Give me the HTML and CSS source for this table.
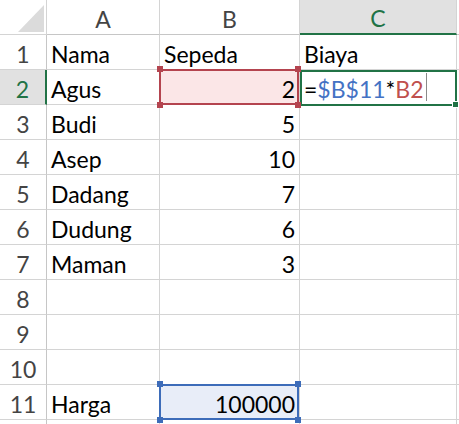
FILE: index.html
```html
<!DOCTYPE html>
<html>
<head>
<meta charset="utf-8">
<link rel="stylesheet" href="styles.css">
</head>
<body>
<div class="sheet">
  <div class="cell corner"><svg class="tri" width="47" height="35" viewBox="0 0 47 35"><polygon points="44,5 44,32 18,32" fill="#dbdbdb"/></svg></div>
  <div class="cell colhead">A</div>
  <div class="cell colhead">B</div>
  <div class="cell colhead sel">C</div>
  <div class="cell colhead edge"></div>

  <div class="cell rowhead">1</div>
  <div class="cell">Nama</div>
  <div class="cell">Sepeda</div>
  <div class="cell">Biaya</div>
  <div class="cell edge"></div>

  <div class="cell rowhead sel">2</div>
  <div class="cell">Agus</div>
  <div class="cell num ref red"><span class="h tl"></span><span class="h tr"></span><span class="h bl"></span><span class="h br"></span>2</div>
  <div class="cell active"><span class="eq">=</span><span class="blue">$B$11</span><span class="eq">*</span><span class="redt">B2</span><span class="caret"></span><span class="fill"></span></div>
  <div class="cell edge"></div>

  <div class="cell rowhead">3</div>
  <div class="cell">Budi</div>
  <div class="cell num">5</div>
  <div class="cell"></div>
  <div class="cell edge"></div>

  <div class="cell rowhead">4</div>
  <div class="cell">Asep</div>
  <div class="cell num">10</div>
  <div class="cell"></div>
  <div class="cell edge"></div>

  <div class="cell rowhead">5</div>
  <div class="cell">Dadang</div>
  <div class="cell num">7</div>
  <div class="cell"></div>
  <div class="cell edge"></div>

  <div class="cell rowhead">6</div>
  <div class="cell">Dudung</div>
  <div class="cell num">6</div>
  <div class="cell"></div>
  <div class="cell edge"></div>

  <div class="cell rowhead">7</div>
  <div class="cell">Maman</div>
  <div class="cell num">3</div>
  <div class="cell"></div>
  <div class="cell edge"></div>

  <div class="cell rowhead">8</div>
  <div class="cell"></div>
  <div class="cell"></div>
  <div class="cell"></div>
  <div class="cell edge"></div>

  <div class="cell rowhead">9</div>
  <div class="cell"></div>
  <div class="cell"></div>
  <div class="cell"></div>
  <div class="cell edge"></div>

  <div class="cell rowhead">10</div>
  <div class="cell"></div>
  <div class="cell"></div>
  <div class="cell"></div>
  <div class="cell edge"></div>

  <div class="cell rowhead">11</div>
  <div class="cell">Harga</div>
  <div class="cell num ref bluebox"><span class="h tl"></span><span class="h tr"></span><span class="h bl"></span><span class="h br"></span>100000</div>
  <div class="cell"></div>
  <div class="cell edge"></div>

  <div class="cell rowhead last"></div>
  <div class="cell last"></div>
  <div class="cell last"></div>
  <div class="cell last"></div>
  <div class="cell edge last"></div>
</div>
</body>
</html>
```

FILE: styles.css
```css
html, body {
  margin: 0;
  padding: 0;
  background: #ffffff;
}
body {
  width: 459px;
  height: 424px;
  overflow: hidden;
}
.sheet {
  display: grid;
  grid-template-columns: 47px 113px 140px 157px 1fr;
  grid-auto-rows: 35px;
  font-family: Lato, "Open Sans", sans-serif;
  font-size: 23px;
  line-height: 28px;
  color: #000;
}
.cell {
  box-sizing: border-box;
  position: relative;
  display: flex;
  align-items: flex-end;
  padding: 0 4px 1px 4px;
  border-right: 1px solid #d4d4d4;
  border-bottom: 1px solid #d4d4d4;
  white-space: nowrap;
}
.last {
  height: 4px;
  border-bottom: none;
}
.edge {
  border-right: none;
}
.corner {
  padding: 0;
}
.tri {
  position: absolute;
  left: 0;
  top: 0;
}
.colhead {
  justify-content: center;
  color: #444;
  border-bottom-color: #c6c6c6;
}
.rowhead {
  justify-content: center;
  color: #444;
  border-right-color: #c6c6c6;
}
.colhead.sel {
  background: #e1e1e1;
  color: #217346;
  border-bottom: 2px solid #217346;
}
.rowhead.sel {
  background: #e1e1e1;
  color: #217346;
  border-right: 2px solid #217346;
}
.num {
  justify-content: flex-end;
}
.ref::after {
  content: "";
  position: absolute;
  top: -1px;
  left: -1px;
  right: 0;
  bottom: -1px;
  border: 2px solid;
  pointer-events: none;
}
.red {
  background: #fbe6e7;
}
.red::after {
  border-color: #b4444f;
}
.bluebox {
  background: #e8edf8;
}
.bluebox::after {
  border-color: #3d6cb9;
}
.h {
  position: absolute;
  width: 6px;
  height: 6px;
  z-index: 2;
}
.red .h { background: #b4444f; }
.bluebox .h { background: #3d6cb9; }
.tl { left: -3px; top: -4px; }
.tr { right: -2px; top: -4px; }
.bl { left: -3px; bottom: -4px; }
.br { right: -2px; bottom: -4px; }
.active::after {
  content: "";
  position: absolute;
  top: 0;
  left: 0;
  right: -1px;
  bottom: -2px;
  border: 2px solid #217346;
  pointer-events: none;
}
.eq { color: #000; }
.blue { color: #4472c4; }
.redt { color: #c0504d; }
.caret {
  display: inline-block;
  width: 1px;
  height: 28px;
  margin-left: 2px;
  margin-bottom: 2px;
  background: #8a8a8a;
}
.fill {
  position: absolute;
  right: -3px;
  bottom: -4px;
  width: 5px;
  height: 5px;
  background: #217346;
  border: 1px solid #fff;
  z-index: 2;
}
```
